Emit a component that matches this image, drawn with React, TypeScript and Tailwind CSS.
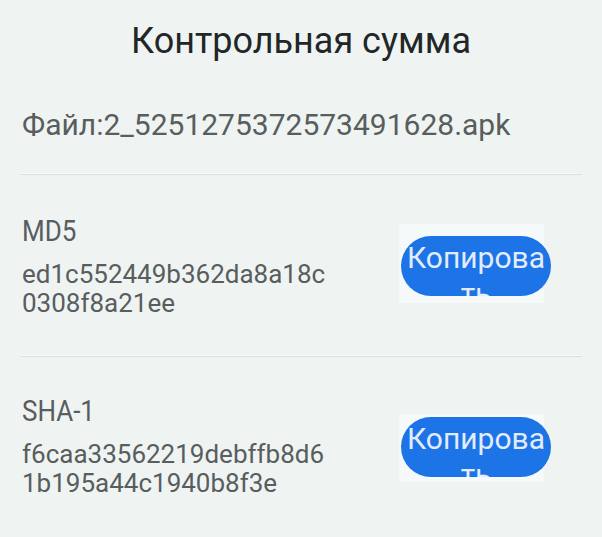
import React from "react";

function CopyButton({ shade }: { shade: string }) {
  return (
    <div className="relative w-[150px] h-[60px]">
      <div className={shade} />
      <div className="relative w-[150px] h-[60px] rounded-full bg-[#1c74e6] overflow-hidden flex justify-center">
        <div className="pt-[4px] text-[30px] leading-[36px] text-[#e2ecfc] text-center w-[146px] break-all">
          Копировать
        </div>
      </div>
    </div>
  );
}

function Row({
  label,
  lines,
  padTop,
  btnTop,
  shade,
}: {
  label: string;
  lines: string[];
  padTop: string;
  btnTop: string;
  shade: string;
}) {
  return (
    <div className="flex items-start justify-between pl-[22px] pr-[51px] h-[180px]">
      <div className={padTop}>
        <div className="text-[26px] leading-[30px] text-[#585d5d] scale-y-[1.1] origin-center">
          {label}
        </div>
        <div className="mt-[14px] text-[26px] leading-[29px] text-[#585d5d]">
          {lines.map((l) => (
            <div key={l}>{l}</div>
          ))}
        </div>
      </div>
      <div className={btnTop}>
        <CopyButton shade={shade} />
      </div>
    </div>
  );
}

function Divider() {
  return (
    <div className="mx-[20px]">
      <div className="h-[1px] bg-[#f8fafa]" />
      <div className="h-[1px] bg-[#dbe0df]" />
    </div>
  );
}

export default function App() {
  return (
    <div
      className="w-[602px] h-[537px] bg-[#eff4f3] overflow-hidden"
      style={{ fontFamily: "Roboto, 'Noto Sans', sans-serif" }}
    >
      <div className="pt-[22px] text-center text-[36px] leading-[36px] text-[#222626] scale-y-[1.05] origin-center">
        Контрольная сумма
      </div>
      <div className="mt-[49px] px-[22px] text-[30px] leading-[36px] text-[#585d5d]">
        Файл:2_5251275372573491628.apk
      </div>
      <div className="mt-[30px]">
        <Divider />
      </div>
      <Row
        label="MD5"
        lines={["ed1c552449b362da8a18c", "0308f8a21ee"]}
        padTop="pt-[41px]"
        btnTop="pt-[61px]"
        shade="absolute left-[-2px] top-[-12px] w-[145px] h-[79px] bg-[#f6f9f9]"
      />
      <Divider />
      <Row
        label="SHA-1"
        lines={["f6caa33562219debffb8d6", "1b195a44c1940b8f3e"]}
        padTop="pt-[39px]"
        btnTop="pt-[60px]"
        shade="absolute left-[-2px] top-[-3px] w-[145px] h-[68px] bg-[#f6f9f9]"
      />
    </div>
  );
}
